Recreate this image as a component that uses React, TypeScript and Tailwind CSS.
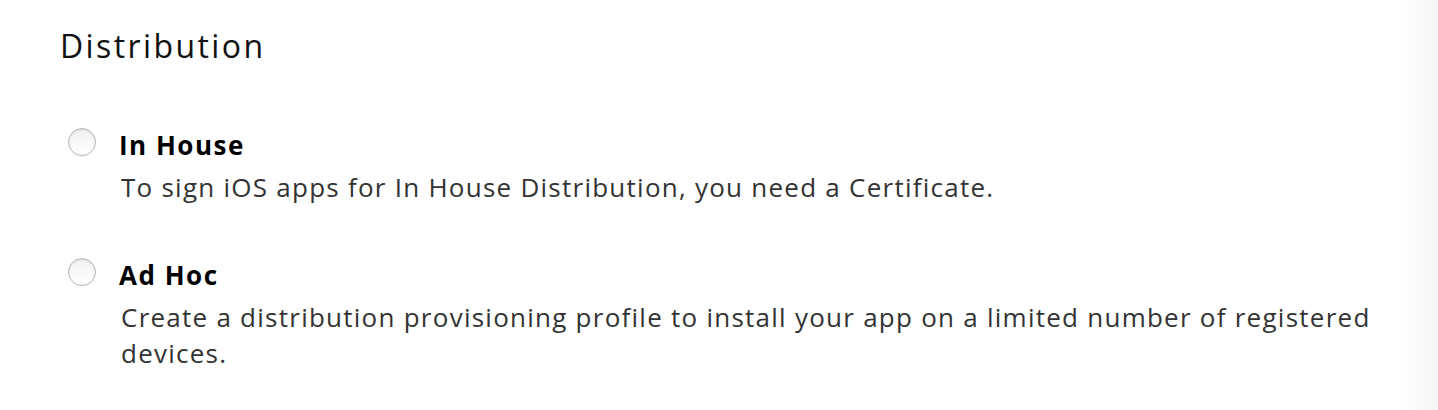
import React from "react";

function Radio() {
  return (
    <span className="mt-[3px] block h-[28px] w-[28px] shrink-0 rounded-full border border-[#b8b8b8] bg-gradient-to-b from-[#f1f1f1] to-white shadow-[inset_0_1px_2px_rgba(0,0,0,0.10),0_1px_1px_rgba(0,0,0,0.05)]" />
  );
}

function Option({ title, desc }: { title: string; desc: string }) {
  return (
    <div className="flex items-start">
      <div className="w-[36px] shrink-0 pl-[8px]">
        <Radio />
      </div>
      <div className="pl-[23px]">
        <div className="text-[26px] font-bold leading-[40px] tracking-[1.5px] text-black">{title}</div>
        <div className="mt-[4px] pl-[2px] text-[26px] leading-[36px] tracking-[1.25px] text-[#333]">{desc}</div>
      </div>
    </div>
  );
}

export default function App() {
  return (
    <div className="flex h-[410px] w-[1438px] bg-white" style={{ fontFamily: '"Open Sans", "Noto Sans", sans-serif' }}>
      <div className="flex-1 pl-[60px] pr-[20px] pt-[22px]">
        <h1 className="text-[32px] font-normal leading-[48px] tracking-[2.4px] text-[#111]">Distribution</h1>
        <div className="mt-[55px] flex flex-col gap-[50px]">
          <Option title="In House" desc="To sign iOS apps for In House Distribution, you need a Certificate." />
          <Option
            title="Ad Hoc"
            desc="Create a distribution provisioning profile to install your app on a limited number of registered devices."
          />
        </div>
      </div>
      <div className="w-[40px] bg-gradient-to-r from-white to-[#f5f5f5]" />
    </div>
  );
}
